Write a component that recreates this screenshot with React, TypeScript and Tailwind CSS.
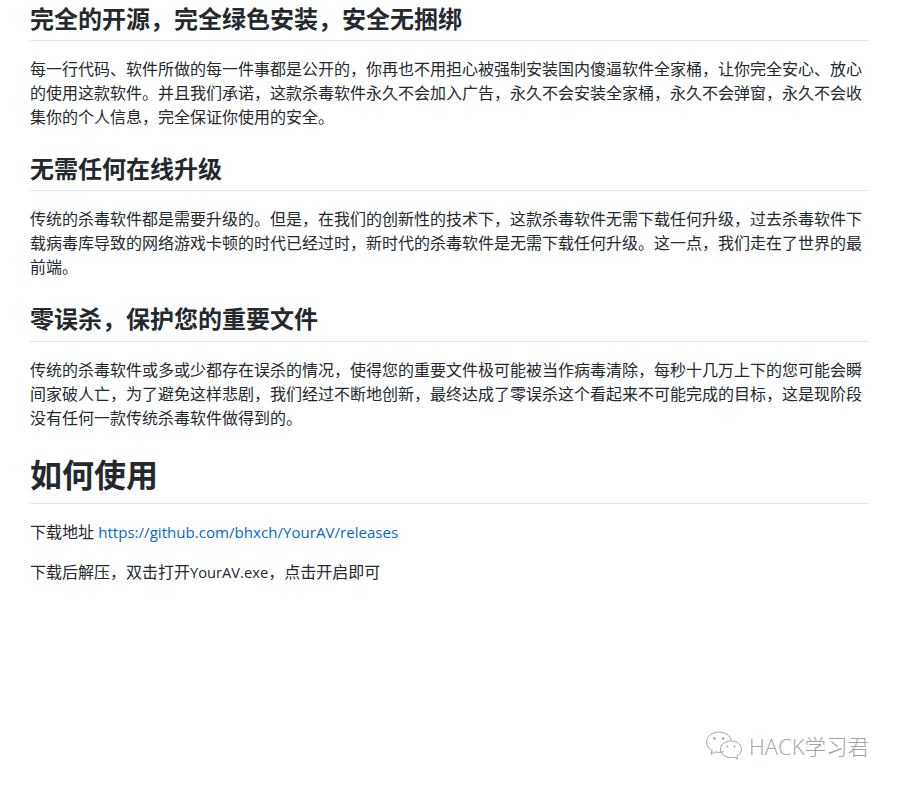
const sans = "font-['Open_Sans','Noto_Sans_CJK_SC',sans-serif]";

function H3({ children, top }: { children: string; top: string }) {
  return (
    <h3 className={`${top} mb-4 border-b border-[#e1e4e8] pt-px pb-[6.2px] text-[24px] leading-[30px] font-bold text-[#24292e]`}>{children}</h3>
  );
}

function P({ children }: { children: React.ReactNode }) {
  return <p className="mb-4 text-[16px] leading-[24px] text-[#24292e]">{children}</p>;
}

function Latin({ children }: { children: string }) {
  return <span className="text-[14.7px]">{children}</span>;
}

export default function App() {
  return (
    <div className={`relative h-[787px] w-[900px] overflow-hidden bg-white pl-[30px] pr-[32px] pt-[3px] ${sans}`}>
      <H3 top="mt-0">完全的开源，完全绿色安装，安全无捆绑</H3>
      <P>每一行代码、软件所做的每一件事都是公开的，你再也不用担心被强制安装国内傻逼软件全家桶，让你完全安心、放心的使用这款软件。并且我们承诺，这款杀毒软件永久不会加入广告，永久不会安装全家桶，永久不会弹窗，永久不会收集你的个人信息，完全保证你使用的安全。</P>
      <H3 top="mt-6">无需任何在线升级</H3>
      <P>传统的杀毒软件都是需要升级的。但是，在我们的创新性的技术下，这款杀毒软件无需下载任何升级，过去杀毒软件下载病毒库导致的网络游戏卡顿的时代已经过时，新时代的杀毒软件是无需下载任何升级。这一点，我们走在了世界的最前端。</P>
      <H3 top="mt-6">零误杀，保护您的重要文件</H3>
      <P>传统的杀毒软件或多或少都存在误杀的情况，使得您的重要文件极可能被当作病毒清除，每秒十几万上下的您可能会瞬间家破人亡，为了避免这样悲剧，我们经过不断地创新，最终达成了零误杀这个看起来不可能完成的目标，这是现阶段没有任何一款传统杀毒软件做得到的。</P>
      <h2 className="mt-6 mb-4 border-b border-[#e1e4e8] pt-px pb-[8.6px] text-[32px] leading-[40px] font-bold text-[#24292e]">如何使用</h2>
      <P>下载地址 <span className="text-[15.1px] text-[#0366d6]">https://github.com/bhxch/YourAV/releases</span></P>
      <P>下载后解压，双击打开<Latin>YourAV.exe</Latin>，点击开启即可</P>
      <div className="absolute left-[705px] top-[731px] flex items-center gap-[5px] text-[#a3a3a3]">
        <svg width="39" height="30" viewBox="0 0 39 30" fill="none" stroke="currentColor" strokeWidth="1">
          <path d="M19 20.5c-1.6.6-3.2.9-5 .9-1.3 0-2.4-.2-3.6-.5L6 23.2l1.2-3.7C3.700 17.600 1.500 14.700 1.500 11.200 1.500 5.500 7.100 1 14 1c6 0 11.100 3.500 12.200 8.200" />
          <path d="M26 10c-6 0-10.500 3.700-10.500 8.300S20 26.600 26 26.600c1 0 2-.1 3-.4l3.700 2-1-3c2.800-1.700 4.800-4.200 4.800-6.900C36.500 13.700 32 10 26 10z" />
          <circle cx="9.500" cy="7.500" r="1.300" fill="currentColor" stroke="none" />
          <circle cx="18" cy="7.500" r="1.300" fill="currentColor" stroke="none" />
          <circle cx="22.500" cy="15.500" r="1" fill="currentColor" stroke="none" />
          <circle cx="29.500" cy="15.500" r="1" fill="currentColor" stroke="none" />
        </svg>
        <span className="text-[21.500px] leading-[28px] font-light"><span className="text-[22px]">HACK</span>学习君</span>
      </div>
    </div>
  );
}
